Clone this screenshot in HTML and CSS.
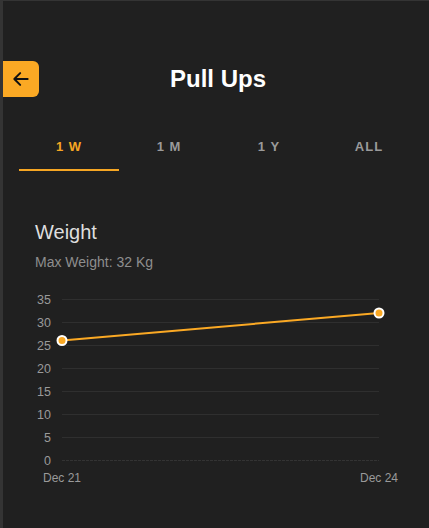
FILE: index.html
```html
<!DOCTYPE html>
<html lang="en">
<head>
  <meta charset="UTF-8">
  <title>Pull Ups</title>
  <link rel="stylesheet" href="styles.css">
</head>
<body>
  <div class="app">
    <header class="header">
      <button class="back" aria-label="Back">
        <svg width="20" height="20" viewBox="0 0 24 24">
          <path d="M20 12H5M11 5l-7 7 7 7" fill="none" stroke="#111" stroke-width="2.4" stroke-linecap="round" stroke-linejoin="round"/>
        </svg>
      </button>
      <h1 class="title">Pull Ups</h1>
    </header>

    <nav class="tabs">
      <button class="tab active">1 W</button>
      <button class="tab">1 M</button>
      <button class="tab">1 Y</button>
      <button class="tab">ALL</button>
    </nav>

    <section class="card">
      <h2 class="card-title">Weight</h2>
      <p class="card-sub">Max Weight: 32 Kg</p>

      <svg class="chart" width="380" height="205" viewBox="35 285 380 205">
        <g class="grid">
          <line x1="62" y1="299.5" x2="379" y2="299.5"/>
          <line x1="62" y1="322.5" x2="379" y2="322.5"/>
          <line x1="62" y1="345.5" x2="379" y2="345.5"/>
          <line x1="62" y1="368.5" x2="379" y2="368.5"/>
          <line x1="62" y1="391.5" x2="379" y2="391.5"/>
          <line x1="62" y1="414.5" x2="379" y2="414.5"/>
          <line x1="62" y1="437.5" x2="379" y2="437.5"/>
          <line x1="62" y1="460.5" x2="379" y2="460.5" class="axis"/>
        </g>
        <g class="y-labels">
          <text x="51" y="303.5">35</text>
          <text x="51" y="326.5">30</text>
          <text x="51" y="349.5">25</text>
          <text x="51" y="372.5">20</text>
          <text x="51" y="395.5">15</text>
          <text x="51" y="418.5">10</text>
          <text x="51" y="441.5">5</text>
          <text x="51" y="464.5">0</text>
        </g>
        <g class="x-labels">
          <text x="62" y="482">Dec 21</text>
          <text x="379" y="482">Dec 24</text>
        </g>
        <line class="series" x1="62" y1="340.5" x2="379" y2="313"/>
        <circle class="dot" cx="62" cy="340.5" r="4.5"/>
        <circle class="dot" cx="379" cy="313" r="4.5"/>
      </svg>
    </section>
  </div>
</body>
</html>
```

FILE: styles.css
```css
html, body {
  margin: 0;
  height: 100%;
  background: #202020;
  font-family: "Liberation Sans", Arial, sans-serif;
}

.app {
  box-sizing: border-box;
  height: 100%;
  border-left: 3px solid #343434;
  border-top: 1px solid #343434;
  background: #202020;
}

.header {
  display: flex;
  align-items: center;
  height: 36px;
  margin-top: 60px;
}

.back {
  display: flex;
  align-items: center;
  justify-content: center;
  width: 36px;
  height: 36px;
  padding: 0;
  border: none;
  border-radius: 0 6px 6px 0;
  background: #fba924;
  cursor: pointer;
}

.title {
  flex: 1;
  margin: 0 32px 0 0;
  text-align: center;
  color: #fff;
  font-size: 24px;
  font-weight: bold;
}

.tabs {
  display: grid;
  grid-template-columns: repeat(4, 100px);
  margin: 26px 0 0 16px;
}

.tab {
  height: 48px;
  padding: 0;
  border: none;
  border-bottom: 2px solid transparent;
  background: none;
  color: #9a9a9a;
  font-family: inherit;
  font-size: 13px;
  font-weight: bold;
  letter-spacing: 1px;
  cursor: pointer;
}

.tab.active {
  color: #f6a623;
  border-bottom-color: #f6a623;
}

.card {
  padding: 0 0 0 32px;
  margin-top: 50px;
}

.card-title {
  margin: 0;
  color: #dedede;
  font-size: 20px;
  font-weight: normal;
  line-height: 22px;
}

.card-sub {
  margin: 11px 0 0;
  color: #8e8e8e;
  font-size: 14px;
  line-height: 16px;
}

.chart {
  display: block;
  margin-top: 15px;
}

.grid line {
  stroke: #2f2f2f;
  stroke-width: 1;
}

.grid .axis {
  stroke: #333;
  stroke-dasharray: 3 1;
}

.y-labels text {
  fill: #9a9a9a;
  font-size: 12.5px;
  text-anchor: end;
}

.x-labels text {
  fill: #9a9a9a;
  font-size: 12px;
  text-anchor: middle;
}

.series {
  stroke: #fba924;
  stroke-width: 2;
}

.dot {
  fill: #fba924;
  stroke: #fff;
  stroke-width: 2;
}
```
